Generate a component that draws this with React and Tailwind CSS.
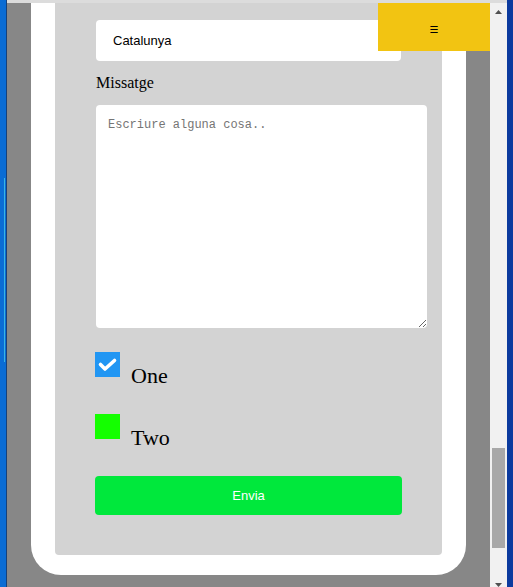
import { useState } from 'react';

const serif = { fontFamily: '"Liberation Serif", serif' };

const CheckRow = ({ label, checked, onToggle }) => (
  <label className="flex items-start cursor-pointer select-none" onClick={onToggle}>
    <span
      className={`w-[25px] h-[25px] flex-shrink-0 ${checked ? 'bg-[#2196f3]' : 'bg-[#14ff00]'}`}
    >
      {checked && (
        <svg width="25" height="25" viewBox="0 0 25 25">
          <polyline
            points="5.5,12.5 10,17 19.5,8.5"
            fill="none"
            stroke="white"
            strokeWidth="3.6"
            strokeLinecap="round"
            strokeLinejoin="round"
          />
        </svg>
      )}
    </span>
    <span className="ml-[11px] mt-[11px] text-[22px] leading-[25px] text-black" style={serif}>
      {label}
    </span>
  </label>
);

const App = () => {
  const [one, setOne] = useState(true);
  const [two, setTwo] = useState(false);
  const [msg, setMsg] = useState('');

  return (
    <div className="flex w-[513px] h-[587px] overflow-hidden bg-[#878787]">
      {/* desktop edge left */}
      <div className="w-[7px] flex-shrink-0 bg-[#0a6cd4] border-r border-[#16417a] flex flex-col">
        <div className="mt-[178px] ml-[4px] w-[1px] h-[184px] bg-[#3ab4e4]" />
      </div>

      <div className="flex-1 flex flex-col min-w-0">
        <div className="h-[3px] bg-[#dcdcdc] flex-shrink-0" />

        <div className="flex flex-1 min-h-0">
          {/* page viewport */}
          <div className="relative flex-1 bg-[#878787] px-[24px] overflow-hidden">
            <div className="w-[435px] bg-white rounded-b-[30px] px-[24px] pb-[20px]">
              <div className="bg-[#d3d3d3] rounded-b-[4px] pl-[41px] pt-[17px] pb-[40px]">
                <select
                  className="block w-[305px] h-[41px] bg-white rounded-[4px] px-[17px] text-[13px] text-black appearance-none outline-none"
                  style={{ fontFamily: '"Liberation Sans", Arial, sans-serif' }}
                  defaultValue="cat"
                >
                  <option value="cat">Catalunya</option>
                  <option value="val">València</option>
                  <option value="bal">Illes Balears</option>
                </select>

                <div className="mt-[13px] h-[18px] text-[16px] leading-[18px] text-black" style={serif}>
                  Missatge
                </div>

                <textarea
                  value={msg}
                  onChange={e => setMsg(e.target.value)}
                  placeholder="Escriure alguna cosa.."
                  className="block mt-[13px] w-[331px] h-[223px] bg-white rounded-[4px] p-[12px] text-[12px] leading-[16px] outline-none placeholder:text-[#757575]"
                  style={{ fontFamily: '"Liberation Mono", monospace' }}
                />

                <div className="mt-[24px] -ml-[1px]">
                  <CheckRow label="One" checked={one} onToggle={() => setOne(v => !v)} />
                </div>
                <div className="mt-[26px] -ml-[1px]">
                  <CheckRow label="Two" checked={two} onToggle={() => setTwo(v => !v)} />
                </div>

                <button
                  className="mt-[26px] -ml-[1px] block w-[307px] h-[39px] bg-[#00e83c] rounded-[4px] text-white text-[13px]"
                  style={{ fontFamily: '"Liberation Sans", Arial, sans-serif' }}
                >
                  Envia
                </button>
              </div>
            </div>

            {/* floating menu button */}
            <button
              className="absolute top-0 right-0 w-[112px] h-[48px] bg-[#f2c412] flex items-center justify-center pt-[4px] text-[10px] text-black"
              style={{ fontFamily: '"DejaVu Sans", sans-serif' }}
            >
              ☰
            </button>
          </div>

          {/* scrollbar */}
          <div className="w-[17px] flex-shrink-0 bg-[#f1f1f1] flex flex-col items-center">
            <div className="h-[17px] pt-[7px]">
              <svg width="7" height="4" viewBox="0 0 7 4">
                <polygon points="0,4 3.5,0 7,4" fill="#505050" />
              </svg>
            </div>
            <div className="mt-auto w-[13px] h-[100px] bg-[#a8a8a8]" />
            <div className="mt-[22px] h-[17px] pt-[13px]">
              <svg width="7" height="4" viewBox="0 0 7 4">
                <polygon points="0,0 7,0 3.5,4" fill="#505050" />
              </svg>
            </div>
          </div>
        </div>
      </div>

      {/* desktop edge right */}
      <div className="w-[6px] flex-shrink-0 bg-[#0b3a9e]" />
    </div>
  );
};

export default App;
